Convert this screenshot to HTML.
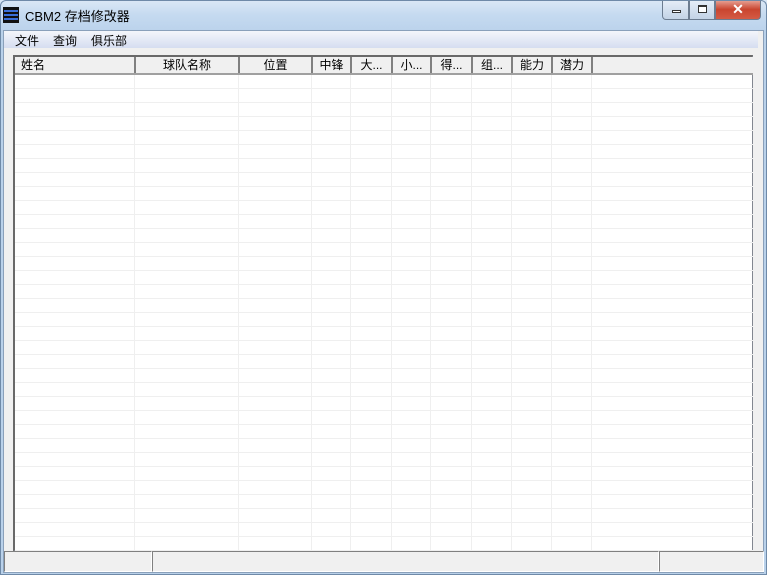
<!DOCTYPE html>
<html><head><meta charset="utf-8"><style>
*{margin:0;padding:0;box-sizing:border-box}
body{width:767px;height:575px;overflow:hidden;background:#b9d1ea;font-family:"Liberation Sans","Noto Sans CJK SC",sans-serif;font-size:12px;position:relative}
.title{position:absolute;left:0;top:0;width:767px;height:30px;background:linear-gradient(#dbe8f6,#c5daf0 50%,#bcd3ec)}
.frame{position:absolute;left:0;top:0;width:767px;height:575px;border:1px solid #6f8aa8;border-radius:6px 6px 0 0;pointer-events:none}
.tt{position:absolute;left:25px;top:6px;font-size:13px;color:#000}
.icon{position:absolute;left:3px;top:7px;width:16px;height:16px;background:#111}
.icon i{position:absolute;left:1px;width:14px;height:2px;background:#3a6fd8}
.client{position:absolute;left:3px;top:30px;width:761px;height:543px;background:#f0f0f0;border:1px solid #8aa0ba}
.menu{position:absolute;left:4px;top:31px;width:754px;height:17px;background:linear-gradient(#f4f6fb,#d5ddf0)}
.menu span{position:absolute;top:1px;font-size:12px}
.lv{position:absolute;left:13px;top:55px;width:740px;height:496px;background:#fff;border:1px solid #828790;border-left:2px solid #696969;border-top:2px solid #696969}
.hdr{position:absolute;left:0;top:0;width:738px;height:18px;background:#f0f0f0;border-bottom:2px solid #a0a0a0}
.h{position:absolute;top:0;height:16px;border-right:2px solid #808080;font-size:12px;line-height:16px;text-align:center}
.rows{position:absolute;left:0;top:18px;width:738px;height:476px;background-image:repeating-linear-gradient(to bottom,transparent 0,transparent 13px,#efefef 13px,#efefef 14px)}
.vl{position:absolute;top:18px;bottom:0;width:1px;background:#efefef}
.sb{position:absolute;top:551px;height:21px;border:1px solid;border-color:#808080 #fff #fff #808080;background:#f0f0f0}
.btn{position:absolute;top:0;height:20px;border:1px solid #6c7c90;border-top:none}
</style></head><body>
<div class="title"></div>
<div class="icon"><i style="top:3px"></i><i style="top:7px"></i><i style="top:11px"></i></div>
<div class="tt">CBM2 存档修改器</div>
<div class="btn" style="left:662px;width:27px;background:linear-gradient(#e6eef8,#c3d3e6);border-radius:0 0 0 4px"><div style="position:absolute;left:9px;top:10px;width:9px;height:3px;border:1px solid #333;background:#fff"></div></div>
<div class="btn" style="left:689px;width:26px;background:linear-gradient(#e6eef8,#c3d3e6)"><div style="position:absolute;left:8px;top:5px;width:9px;height:8px;border:1px solid #333;border-top-width:2px;background:#fff"></div></div>
<div class="btn" style="left:715px;width:46px;background:linear-gradient(#e8a79a,#c9452f 50%,#d45b45);border-radius:0 0 4px 0;color:#fff;font-weight:bold;text-align:center;font-size:14px;line-height:18px">✕</div>
<div class="client"></div>
<div class="menu"><span style="left:11px">文件</span><span style="left:49px">查询</span><span style="left:87px">俱乐部</span></div>
<div class="lv">
<div class="rows"></div>
<div class="vl" style="left:119px"></div><div class="vl" style="left:223px"></div><div class="vl" style="left:296px"></div><div class="vl" style="left:335px"></div><div class="vl" style="left:376px"></div><div class="vl" style="left:415px"></div><div class="vl" style="left:456px"></div><div class="vl" style="left:496px"></div><div class="vl" style="left:536px"></div><div class="vl" style="left:576px"></div>
<div class="hdr">
<div class="h" style="left:0;width:121px;text-align:left;padding-left:6px">姓名</div>
<div class="h" style="left:121px;width:104px">球队名称</div>
<div class="h" style="left:225px;width:73px">位置</div>
<div class="h" style="left:298px;width:39px">中锋</div>
<div class="h" style="left:337px;width:41px">大...</div>
<div class="h" style="left:378px;width:39px">小...</div>
<div class="h" style="left:417px;width:41px">得...</div>
<div class="h" style="left:458px;width:40px">组...</div>
<div class="h" style="left:498px;width:40px">能力</div>
<div class="h" style="left:538px;width:40px">潜力</div>
</div></div>
<div class="sb" style="left:4px;width:148px"></div>
<div class="sb" style="left:152px;width:507px"></div>
<div class="sb" style="left:659px;width:105px"></div>
<div class="frame"></div>
</body></html>
